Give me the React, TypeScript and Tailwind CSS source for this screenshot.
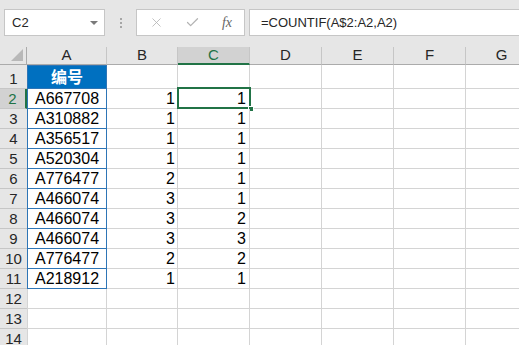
import React from 'react'
import { X, Check } from 'lucide-react'

const cols = ['A', 'B', 'C', 'D', 'E', 'F', 'G']
const colWidths = 'grid-cols-[27px_80px_71px_72px_72px_72px_72px_72px]'

const rows: [string, number | null, number | null][] = [
  ['A667708', 1, 1],
  ['A310882', 1, 1],
  ['A356517', 1, 1],
  ['A520304', 1, 1],
  ['A776477', 2, 1],
  ['A466074', 3, 1],
  ['A466074', 3, 2],
  ['A466074', 3, 3],
  ['A776477', 2, 2],
  ['A218912', 1, 1],
]

const font = { fontFamily: '"Liberation Sans", Arial, sans-serif' }

const FormulaBar: React.FC = () => (
  <div className="h-[47px] bg-[#e6e6e6] flex items-start pt-[9px] text-[13px] text-[#262626]">
    {/* Name box */}
    <div className="ml-[4px] w-[101px] h-[27px] bg-white border border-[#c6c6c6] flex items-center justify-between pl-[7px] pr-[6px]">
      <span>C2</span>
      <span className="w-0 h-0 border-l-[4px] border-r-[4px] border-t-[4px] border-l-transparent border-r-transparent border-t-[#7a7a7a]" />
    </div>
    {/* separator dots */}
    <div className="w-[31px] h-[27px] flex flex-col items-center justify-center gap-[2px]">
      <span className="w-[2px] h-[2px] bg-[#a6a6a6]" />
      <span className="w-[2px] h-[2px] bg-[#a6a6a6]" />
      <span className="w-[2px] h-[2px] bg-[#a6a6a6]" />
    </div>
    {/* Cancel / enter / fx */}
    <div className="w-[109px] h-[27px] bg-white border border-[#c6c6c6] flex items-center pl-[12px] pr-[12px] justify-between">
      <X size={15} strokeWidth={1.3} className="text-[#b3b3b3]" />
      <Check size={15} strokeWidth={2} className="text-[#b3b3b3]" />
      <span className="italic text-[14px] text-[#666]" style={{ fontFamily: '"Liberation Serif", serif' }}>fx</span>
    </div>
    {/* Formula input */}
    <div className="ml-[4px] flex-1 h-[27px] bg-white border-y border-l border-[#c6c6c6] flex items-center pl-[11px]">
      =COUNTIF(A$2:A2,A2)
    </div>
  </div>
)

export default function App() {
  const allRows = Array.from({ length: 14 }, (_, i) => i + 1)

  return (
    <div className="w-[519px] h-[345px] overflow-hidden bg-white" style={font}>
      <FormulaBar />
      <div className={`grid ${colWidths} grid-rows-[18px_24px_repeat(13,20px)] text-[16px] text-black`}>
        {/* corner */}
        <div className="bg-[#e6e6e6] border-r border-b border-[#ababab] relative">
          <span className="absolute right-[3px] bottom-[3px] w-0 h-0 border-l-[12px] border-t-[12px] border-l-transparent border-t-transparent border-b-0 border-r-[0px] border-[#b8b8b8]" style={{ borderBottom: '12px solid #b8b8b8', borderLeft: '12px solid transparent', borderTop: 0 }} />
        </div>
        {cols.map(c => (
          <div
            key={c}
            className={
              c === 'C'
                ? 'bg-[#d2d2d2] border-r border-[#c6c6c6] border-b-2 border-b-[#217346] text-[#217346] text-[15px] flex items-center justify-center'
                : 'bg-[#e6e6e6] border-r border-b border-[#c6c6c6] border-b-[#ababab] text-[#262626] text-[15px] flex items-center justify-center'
            }
          >
            {c}
          </div>
        ))}

        {allRows.map(r => {
          const data = r >= 2 && r <= 11 ? rows[r - 2] : null
          const inA = r <= 11
          return (
            <React.Fragment key={r}>
              <div
                className={
                  r === 2
                    ? 'bg-[#d2d2d2] border-b border-[#c6c6c6] border-r-2 border-r-[#217346] text-[#217346] text-[15px] flex items-end justify-center leading-[19px]'
                    : 'bg-[#e6e6e6] border-b border-[#c6c6c6] text-[#262626] text-[15px] flex items-end justify-center leading-[19px]'
                }
              >
                {r}
              </div>
              {/* Column A */}
              {r === 1 ? (
                <div
                  className="bg-[#0070c0] border border-[#2e75b6] text-white font-bold flex items-end justify-center leading-[21px]"
                  style={{ fontFamily: '"Liberation Sans", "Noto Sans CJK SC", sans-serif' }}
                >
                  编号
                </div>
              ) : inA ? (
                <div className="border-l border-r border-b border-[#2e75b6] flex items-end justify-center leading-[19px]">
                  {data?.[0]}
                </div>
              ) : (
                <div className="border-l border-[#d4d4d4] border-r border-b" />
              )}
              {/* B */}
              <div className="border-r border-b border-[#d4d4d4] flex items-end justify-end pr-[2px] leading-[19px]">
                {data?.[1]}
              </div>
              {/* C */}
              <div className="border-r border-b border-[#d4d4d4] flex items-end justify-end pr-[3px] leading-[19px] relative">
                {data?.[2]}
                {r === 2 && (
                  <span className="absolute left-[-1px] top-[-2px] right-[-2px] bottom-[-1px] border-2 border-[#217346]">
                    <span className="absolute right-[-5px] bottom-[-5px] w-[6px] h-[6px] bg-[#217346] border border-white" />
                  </span>
                )}
              </div>
              {['D', 'E', 'F', 'G'].map(c => (
                <div key={c} className="border-r border-b border-[#d4d4d4]" />
              ))}
            </React.Fragment>
          )
        })}
      </div>
    </div>
  )
}
